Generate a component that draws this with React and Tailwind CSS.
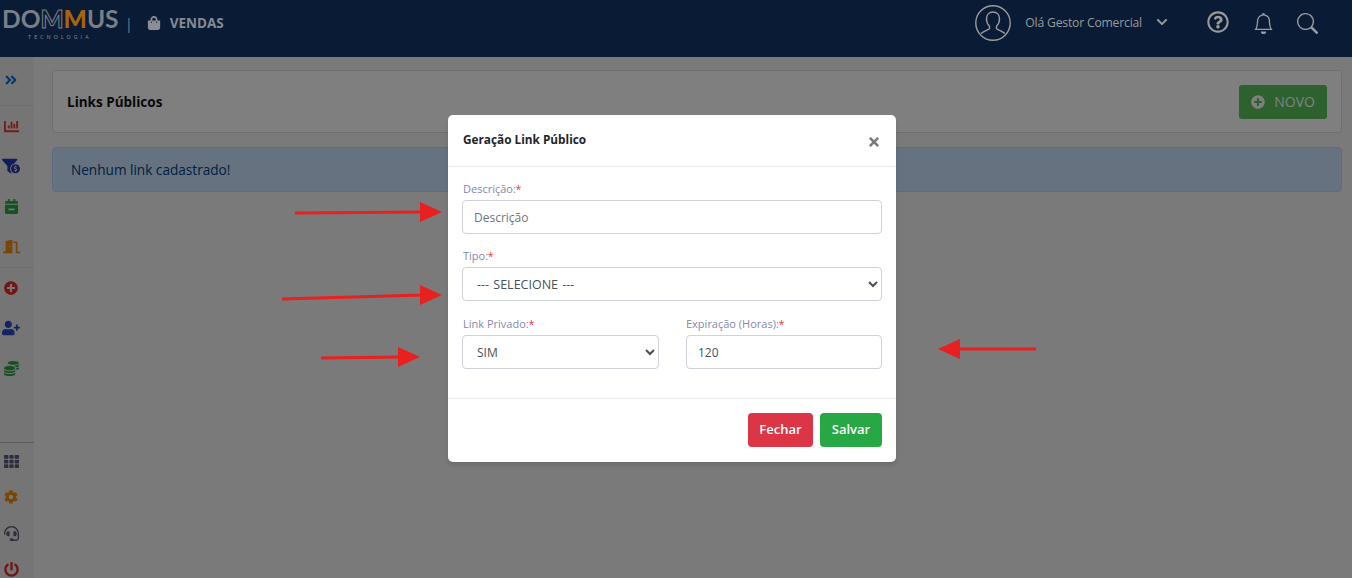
import {
    FaAngleDoubleRight, FaChartBar, FaFunnelDollar, FaCalendarMinus, FaDoorOpen, FaPlusCircle,
    FaUserPlus, FaCoins, FaTh, FaCog, FaHeadset, FaPowerOff, FaShoppingBag, FaChevronDown,
    FaRegQuestionCircle, FaTimes,
} from "react-icons/fa";
import { BsBell, BsSearch } from "react-icons/bs";

const SideItem = ({ icon: Icon, color, size = 15, tall = "h-10" }) => (
    <div className={`flex items-center justify-center w-[22px] ${tall}`}>
        <Icon size={size} color={color} />
    </div>
);

const Label = ({ children }) => (
    <label className="block text-[11px] leading-[16px] text-[#8587ad] mb-[3px]">
        {children}<span className="text-[10px] text-red-500">*</span>
    </label>
);

const Arrow = ({ x1, y1, x2, y2 }) => {
    const dir = x2 > x1 ? 1 : -1;
    return (
        <g>
            <line x1={x1} y1={y1} x2={x2 - dir * 18} y2={y2} stroke="#e8201f" strokeWidth="3" />
            <polygon points={`${x2},${y2} ${x2 - dir * 22},${y2 - 10} ${x2 - dir * 22},${y2 + 10}`} fill="#e8201f" />
        </g>
    );
};

const App = () => {
    return (
        <div className="relative h-screen overflow-hidden bg-[#f4f4f4] font-['Open_Sans',sans-serif]">

            {/* Top bar */}
            <header className="relative z-20 flex items-center h-[57px] bg-[#0a1c35] pb-[11px]">
                <div className="ml-[2px] -mt-[9px] w-[116px] relative font-['Lato',sans-serif] font-bold text-[24.500px] leading-[28px] text-[#7b7f85] whitespace-nowrap">
                    DO<span className="text-transparent [-webkit-text-stroke:1px_#7b7f85]">M</span><span className="text-[#a86408] font-black">M</span>US
                    <div className="absolute left-[26px] top-[28px] text-[5px] leading-[8px] tracking-[3.200px] font-normal text-[#8a8f96]">TECNOLOGIA</div>
                </div>
                <span className="ml-[7px] text-[#7b7f85] text-[14px]">|</span>
                <FaShoppingBag size={14} color="#8a8f96" className="ml-[14px]" />
                <span className="ml-[9px] text-[13.500px] font-bold text-[#858a92]">VENDAS</span>

                <div className="ml-auto flex items-center text-[#9a9a9a]">
                    <svg width="36" height="36" viewBox="0 0 36 36" fill="none" stroke="#9a9a9a" strokeWidth="1.4">
                        <circle cx="18" cy="18" r="17.2" />
                        <path d="M18 7c-4 0-6.500 3-6.500 7 0 3 1.300 5.600 3 7.200v2.300c0 1-5.500 2.600-8.500 5M18 7c4 0 6.500 3 6.500 7 0 3-1.300 5.600-3 7.200v2.300c0 1 5.500 2.600 8.500 5" />
                    </svg>
                    <span className="ml-[14px] text-[12.200px] tracking-[-0.2px]">Olá Gestor Comercial</span>
                    <FaChevronDown size={12} className="ml-[14px] mb-[3px]" />
                    <FaRegQuestionCircle size={22} className="ml-[39px] mb-[3px]" />
                    <BsBell size={21} className="ml-[24px]" />
                    <BsSearch size={21} className="ml-[23px] mr-[34px]" />
                </div>
            </header>

            <div className="flex">

                {/* Sidebar */}
                <aside className="w-[34px] shrink-0 h-[521px] bg-[#ebebeb]">
                    <div className="h-[49px] pt-[3px] border-b border-[#dcdcdc]">
                        <SideItem icon={FaAngleDoubleRight} color="#0a6ee6" size={14} />
                    </div>
                    <div className="pb-[1px] border-b border-[#dcdcdc]">
                        <SideItem icon={FaChartBar} color="#e03a3a" size={15} />
                        <SideItem icon={FaFunnelDollar} color="#2438b0" size={18} />
                        <SideItem icon={FaCalendarMinus} color="#28a745" size={15} />
                        <SideItem icon={FaDoorOpen} color="#f08c0a" size={17} />
                    </div>
                    <div>
                        <SideItem icon={FaPlusCircle} color="#e42a2a" size={14} />
                        <SideItem icon={FaUserPlus} color="#2a46c0" size={18} />
                        <SideItem icon={FaCoins} color="#2e9e4a" size={15} />
                    </div>
                    <div className="mt-[54px] border-t border-[#bdbdbd]">
                        <SideItem icon={FaTh} color="#5a6078" tall="h-9" />
                        <SideItem icon={FaCog} color="#f08c0a" tall="h-9" size={14} />
                        <SideItem icon={FaHeadset} color="#5a6078" tall="h-9" size={15} />
                        <SideItem icon={FaPowerOff} color="#e42a2a" tall="h-9" size={15} />
                    </div>
                </aside>

                {/* Content */}
                <main className="flex-1 pt-[13px] pl-[18px] pr-[10px]">
                    <div className="flex items-center justify-between h-[63px] bg-white border border-[#dedede] rounded-[4px] pl-[14px] pr-[14px]">
                        <h2 className="text-[13.500px] leading-[20px] mt-[1px] font-bold text-[#111]">Links Públicos</h2>
                        <button className="flex items-center gap-[9px] h-[34px] px-[12px] bg-[#5ac35a] rounded-[3px] text-white text-[14px]">
                            <FaPlusCircle size={14} />
                            NOVO
                        </button>
                    </div>
                    <div className="mt-[14px] h-[45px] flex items-center pl-[18px] pt-[2px] bg-[#cce5ff] border border-[#b8daff] rounded-[4px] text-[#004085] text-[13.600px]">
                        Nenhum link cadastrado!
                    </div>
                </main>
            </div>

            {/* Backdrop */}
            <div className="absolute inset-0 z-10 bg-black/50"></div>

            {/* Modal */}
            <div className="absolute z-30 left-[448px] top-[115px] w-[448px] h-[347px] bg-white rounded-[5px] shadow-md">
                <div className="flex items-start justify-between h-[52px] border-b border-[#e9ecef] pl-[15px] pr-[15px] pt-[14px]">
                    <h3 className="text-[11.800px] leading-[20px] font-bold text-[#212529]">Geração Link Público</h3>
                    <FaTimes size={14} color="#7a7a7a" className="mt-[6px]" />
                </div>

                <div className="h-[232px] px-[14px] pt-[14px] border-b border-[#e9ecef]">
                    <div className="pl-[1px]">
                        <Label>Descrição:</Label>
                    </div>
                    <input
                        placeholder="Descrição"
                        className="w-full h-[34px] px-[11px] text-[12px] text-[#495057] placeholder:text-[#6c757d] border border-[#ced4da] rounded-[4px] outline-none"
                    />

                    <div className="mt-[14px]">
                        <div className="pl-[1px]">
                            <Label>Tipo:</Label>
                        </div>
                        <select className="w-full h-[34px] px-[10px] text-[12.500px] [word-spacing:1px] text-[#495057] bg-white border border-[#ced4da] rounded-[4px] outline-none">
                            <option>--- SELECIONE ---</option>
                        </select>
                    </div>

                    <div className="grid grid-cols-[197px_196px] gap-x-[27px] mt-[15px]">
                        <div>
                            <div className="pl-[1px]">
                                <Label>Link Privado:</Label>
                            </div>
                            <select className="w-full h-[34px] px-[10px] text-[12px] text-[#495057] bg-white border border-[#ced4da] rounded-[4px] outline-none">
                                <option>SIM</option>
                            </select>
                        </div>
                        <div>
                            <Label>Expiração (Horas):</Label>
                            <input
                                defaultValue="120"
                                className="w-full h-[34px] px-[11px] text-[12px] text-[#495057] border border-[#ced4da] rounded-[4px] outline-none"
                            />
                        </div>
                    </div>
                </div>

                <div className="flex justify-end gap-[7px] pt-[14px] pr-[14px]">
                    <button className="w-[65px] h-[34px] bg-[#dc3545] rounded-[4px] text-white text-[13px] font-semibold">Fechar</button>
                    <button className="w-[62px] h-[34px] bg-[#28a745] rounded-[4px] text-white text-[13px] font-semibold">Salvar</button>
                </div>
            </div>

            {/* Red annotation arrows drawn over the page */}
            <svg className="absolute z-40 inset-0 pointer-events-none" width="1352" height="578">
                <Arrow x1={295} y1={213} x2={442} y2={212} />
                <Arrow x1={282} y1={299} x2={442} y2={295} />
                <Arrow x1={321} y1={358} x2={420} y2={357} />
                <Arrow x1={1036} y1={349} x2={938} y2={349} />
            </svg>
        </div>
    );
};

export default App;
